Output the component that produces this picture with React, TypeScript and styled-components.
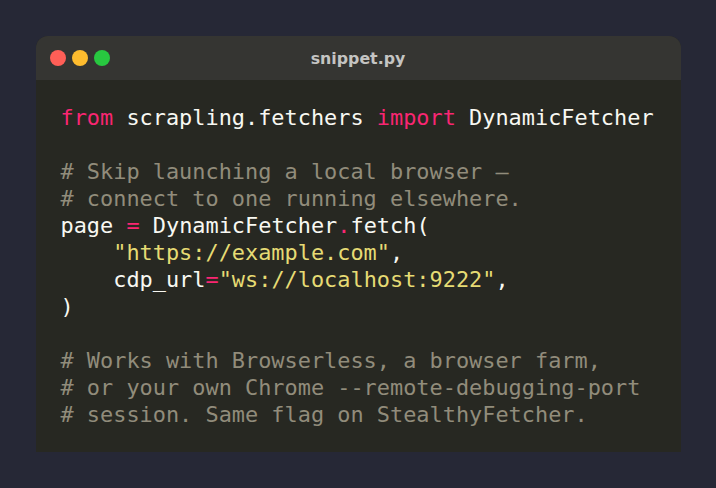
import React from "react";
import styled, { createGlobalStyle } from "styled-components";

const GlobalStyle = createGlobalStyle`
  html, body {
    margin: 0;
    padding: 0;
    background: #262836;
  }
  body {
    font-family: "DejaVu Sans", sans-serif;
  }
`;

const Page = styled.div`
  width: 716px;
  height: 488px;
  box-sizing: border-box;
  padding: 36px 35px;
  background: #262836;
  display: flex;
  justify-content: center;
  align-items: flex-start;
`;

const Card = styled.div`
  width: 645px;
  border-radius: 12px 12px 0 0;
  overflow: hidden;
  background: #272822;
  display: flex;
  flex-direction: column;
`;

const TitleBar = styled.div`
  height: 44px;
  background: #353532;
  display: flex;
  align-items: center;
  padding: 0 14px;
`;

const Dots = styled.div`
  display: flex;
  gap: 6px;
`;

const Dot = styled.span<{ $color: string }>`
  width: 16px;
  height: 16px;
  border-radius: 50%;
  background: ${(p) => p.$color};
  display: block;
`;

const Title = styled.div`
  flex: 1;
  text-align: center;
  margin-right: 60px;
  font-family: "DejaVu Sans", sans-serif;
  font-weight: bold;
  font-size: 15.8px;
  color: #c4c4c2;
`;

const Code = styled.pre`
  margin: 0;
  padding: 24px 24px 24px 25px;
  font-family: "DejaVu Sans Mono", monospace;
  font-size: 21.9px;
  line-height: 27px;
  color: #f8f8f2;
  white-space: pre;
`;

const Tok = styled.span<{ $kind: "kw" | "str" | "com" | "op" }>`
  color: ${(p) =>
    p.$kind === "kw" || p.$kind === "op"
      ? "#f92672"
      : p.$kind === "str"
      ? "#e6db74"
      : "#918c7b"};
`;

export default function App() {
  return (
    <>
      <GlobalStyle />
      <Page>
        <Card>
          <TitleBar>
            <Dots>
              <Dot $color="#ff5f57" />
              <Dot $color="#febc2e" />
              <Dot $color="#28c840" />
            </Dots>
            <Title>snippet.py</Title>
          </TitleBar>
          <Code>
            <Tok $kind="kw">from</Tok> scrapling.fetchers <Tok $kind="kw">import</Tok> DynamicFetcher{"\n"}
            {"\n"}
            <Tok $kind="com"># Skip launching a local browser —</Tok>{"\n"}
            <Tok $kind="com"># connect to one running elsewhere.</Tok>{"\n"}
            page <Tok $kind="op">=</Tok> DynamicFetcher<Tok $kind="op">.</Tok>fetch({"\n"}
            {"    "}<Tok $kind="str">"https://example.com"</Tok>,{"\n"}
            {"    "}cdp_url<Tok $kind="op">=</Tok><Tok $kind="str">"ws://localhost:9222"</Tok>,{"\n"}
            ){"\n"}
            {"\n"}
            <Tok $kind="com"># Works with Browserless, a browser farm,</Tok>{"\n"}
            <Tok $kind="com"># or your own Chrome --remote-debugging-port</Tok>{"\n"}
            <Tok $kind="com"># session. Same flag on StealthyFetcher.</Tok>
          </Code>
        </Card>
      </Page>
    </>
  );
}
